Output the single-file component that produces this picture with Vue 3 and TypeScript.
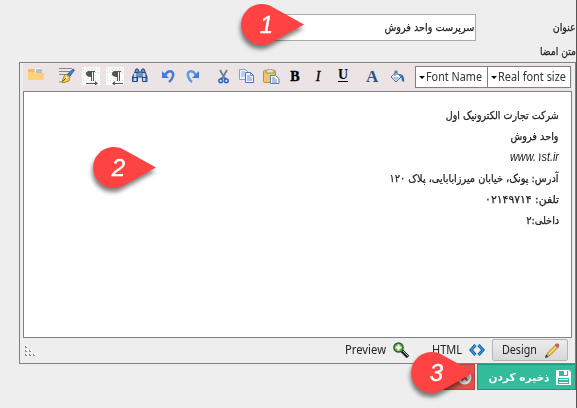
<script setup lang="ts">
interface Line { text: string; width: number; latin?: boolean }

const lines: Line[] = [
  { text: 'شرکت تجارت الکترونیک اول', width: 113 },
  { text: 'واحد فروش', width: 48 },
  { text: 'www.۱st.ir', width: 49, latin: true },
  { text: 'آدرس: پونک، خیابان میرزابابایی، پلاک ۱۲۰', width: 169 },
  { text: 'تلفن: ۰۲۱۴۹۷۱۴', width: 74 },
  { text: 'داخلی:۲', width: 33 },
]

const pins = [
  { n: 1, x: 233, y: 0 },
  { n: 2, x: 85, y: 143 },
  { n: 3, x: 403, y: 348 },
]

// Condenses or expands a label to the given width in pixels.
const vFit = {
  mounted(el: HTMLElement, binding: { value: number }) {
    const natural = el.getBoundingClientRect().width
    el.style.transform = `scaleX(${binding.value / natural})`
    el.style.marginInlineEnd = `${binding.value - natural}px`
  },
}
</script>

<template>
  <main class="page">
    <div class="row title-row">
      <div class="field"><span v-fit="90" class="fit">سرپرست واحد فروش</span></div>
      <label class="caption"><span v-fit="23" class="fit">عنوان</span></label>
    </div>
    <div class="row body-label"><span v-fit="36" class="fit">متن امضا</span></div>

    <section class="editor">
      <div class="toolbar">
        <svg class="ic folder" width="16" height="16" viewBox="0 0 16 16">
          <path d="M0 3q0-1 1-1h5l1 2v9H0z" fill="#f6b578" />
          <path d="M7 1h7v6H7z" fill="#fff" stroke="#ddd" stroke-width=".5" /><path d="M8 2h6v4H8z" fill="#b9bfc6" />
          <path d="M0 5h6l2 1h8v6q0 1-1 1H1q-1 0-1-1z" fill="#ffd17c" />
        </svg>
        <svg class="ic pen" width="17" height="16" viewBox="0 0 17 16">
          <path d="M1 1.500h13M1 4.500h11M1 7.500h7M1 15h5" stroke="#888" />
          <path d="M15 2l1.500 1-5 7-3-2z" fill="#3d7bd0" stroke="#1d4f9c" stroke-width=".7" />
          <path d="M8 7l4 3-1 4-6 2-1-1 2-6z" fill="#f4c84e" stroke="#a8762b" stroke-width=".8" />
          <path d="M4 15l5-5" stroke="#795320" /><circle cx="8.500" cy="10.500" r="1" fill="#fff" />
        </svg>
        <svg v-for="dir in ['ltr', 'rtl']" :key="dir" class="ic para" :class="dir" width="18" height="18" viewBox="0 0 18 18">
          <path d="M0 0h18v18H0z" fill="#fbfcf9" />
          <path d="M1 1.500h16M3 3.500h14M1 5.500h16M1 13.500h16" stroke="#cfe6ca" stroke-dasharray="1 2" />
          <path d="M1 2.500h16M1 8.500h5m7 0h4M1 11.500h16" stroke="#ecd6ec" stroke-dasharray="1 3" />
          <path d="M8 3H14v1h-1v9h-1V4h-1v9h-1V9C3 9 4 3 8 3z" fill="#555" :transform="dir === 'ltr' ? 'translate(-1 1)' : 'translate(1 1)'" />
          <path v-if="dir === 'ltr'" d="M4 16h9v-2l3 2.500-3 2v-1.500H4z" fill="#555" />
          <path v-else d="M17 16H9v-2l-3 2.500 3 2v-1.500h8z" fill="#555" />
        </svg>
        <svg class="ic find" width="16" height="15" viewBox="0 0 16 15">
          <path d="M2.500 5L4 1h2l1 3h2l1-3h2l1.500 4 1.500 4v4.500h-4.500V9h-5v4.500H.5V9z" fill="#6d93c9" stroke="#25477d" />
          <path d="M3 5v8M12 5v8" stroke="#e0edfb" stroke-width="1.500" /><path d="M1 9.500h5M10 9.500h5M3 4.500h3.500M9.500 4.500H13" stroke="#25477d" />
        </svg>
        <svg class="ic undo" width="13" height="14" viewBox="0 0 13 14">
          <path d="M3 6C7 0 12 2 11 7Q10 11 7 13" fill="none" stroke="#427bda" stroke-width="2.500" /><path d="M0 2v7h7z" fill="#427bda" />
        </svg>
        <svg class="ic redo" width="13" height="14" viewBox="0 0 13 14">
          <path d="M10 6C6 0 1 2 2 7Q3 11 6 13" fill="none" stroke="#6297e5" stroke-width="2.500" /><path d="M13 2v7H6z" fill="#427bda" />
        </svg>
        <svg class="ic cut" width="11" height="15" viewBox="0 0 11 15">
          <path d="M2 1l5 9M9 1L4 10" stroke="#6f7c90" stroke-width="1.800" />
          <path d="M4 9l-1 1M7 9l1 1" stroke="#275fc0" stroke-width="2" />
          <circle cx="2.700" cy="11.800" r="1.900" fill="none" stroke="#2866ce" stroke-width="1.500" /><circle cx="8.300" cy="11.800" r="1.900" fill="none" stroke="#2866ce" stroke-width="1.500" />
        </svg>
        <svg class="ic copy" width="16" height="14" viewBox="0 0 16 14">
          <path d="M.5.5h6l3 3v7h-9z" fill="#edf4ff" stroke="#7da2df" /><path d="M2 3h4M2 5h5M2 7h5" stroke="#86a8dc" />
          <path d="M6.500 3.500h5l3 3v7h-8z" fill="#f5f9ff" stroke="#4777be" /><path d="M11.500 3.500v3h3M8 7h3M8 9h5M8 11h5" fill="none" stroke="#6791ce" />
        </svg>
        <svg class="ic paste" width="17" height="15" viewBox="0 0 17 15">
          <rect x=".5" y="1.500" width="12" height="12" rx="1" fill="#f2c668" stroke="#c28d32" />
          <path d="M3 1h2l1-1h2l1 1h2v3H3z" fill="#e5e5cf" stroke="#918461" stroke-width=".8" />
          <path d="M7.500 6.500h5l3.500 3v5H7.500z" fill="#f7faff" stroke="#557fb4" /><path d="M9 9h3M9 11h5M9 13h5" stroke="#6889b6" />
        </svg>
        <b class="ic g bold">B</b>
        <i class="ic g ital">I</i>
        <b class="ic g under">U</b>
        <b class="ic g color">A</b>
        <svg class="ic fill" width="15" height="14" viewBox="0 0 15 14">
          <path d="M6 2l5 5-5 5-5-5z" fill="#eef4fb" stroke="#52719b" /><path d="M2 7h8l-4 4z" fill="#a8c6e6" />
          <path d="M5 6V1h2v4" fill="none" stroke="#5b6c80" /><path d="M8 4q7-1 6 8l-2-1-1-5z" fill="#2f66b5" />
        </svg>
        <div class="select name"><span class="arrow"></span><span v-fit="56" class="fit">Font Name</span></div>
        <div class="select size"><span class="arrow"></span><span v-fit="68" class="fit">Real font size</span></div>
      </div>

      <div class="content">
        <p v-for="line in lines" :key="line.text" :class="{ latin: line.latin }">
          <span v-fit="line.width" class="fit">{{ line.text }}</span>
        </p>
      </div>

      <div class="modes">
        <svg class="grip" width="12" height="12" viewBox="0 0 12 12">
          <path d="M1 0h2v2H1zM1 4h2v2H1zM5 4h2v2H5zM1 8h2v2H1zM5 8h2v2H5zM9 8h2v2H9z" fill="#fff" />
          <path d="M.5 1v1.500H2M.5 5v1.500H2M4.500 5v1.500H6M.5 9v1.500H2M4.500 9v1.500H6M8.500 9v1.500H10" fill="none" stroke="#888" />
        </svg>
        <div class="mode preview"><span v-fit="41" class="fit">Preview</span>
          <svg width="16" height="16" viewBox="0 0 16 16">
            <path d="M9 9l6 6" stroke="#222" stroke-width="3.500" /><path d="M10 9l5 5" stroke="#bbb" stroke-width="1" />
            <circle cx="5.500" cy="5.500" r="4.600" fill="#69a842" stroke="#28662f" stroke-width="1.500" /><path d="M5.500 2.500v6M2.500 5.500h6" stroke="#fff" stroke-width="2" />
          </svg>
        </div>
        <div class="mode html"><span v-fit="30" class="fit">HTML</span>
          <svg width="16" height="12" viewBox="0 0 16 12"><path d="M6.500 1L2 6l4.500 5M9.500 1L14 6l-4.500 5" fill="none" stroke="#135590" stroke-width="3" /><path d="M6.500 1L2 6l4.500 5M9.500 1L14 6l-4.500 5" fill="none" stroke="#38a0e4" stroke-width="1.200" /></svg>
        </div>
        <div class="mode design"><span v-fit="35" class="fit">Design</span>
          <svg width="15" height="15" viewBox="0 0 15 15">
            <path d="M1.500 13.500l1-3.500 8-8 2.500 2.500-8 8z" fill="#f7bd45" stroke="#a97526" stroke-width=".8" /><path d="M4 11l7-7" stroke="#ffe79b" /><path d="M10 2l1-1q2-1 3 1l-1 3z" fill="#d95855" stroke="#a66" stroke-width=".7" /><path d="M0 15l1-3.500 2.500 2.500z" fill="#333" />
          </svg>
        </div>
      </div>
    </section>

    <div class="actions">
      <div class="btn cancel">
        <svg width="15" height="15" viewBox="0 0 15 15"><circle cx="7.500" cy="7.500" r="7" fill="#e4e4e4" /><path d="M4.500 4.500l6 6m0-6l-6 6" stroke="#c44e4b" stroke-width="2" /></svg>
      </div>
      <div class="btn save">
        <svg width="15" height="15" viewBox="0 0 15 15"><path fill-rule="evenodd" d="M0 0h13l2 2v13H0zM3 1v5h9V1zM2 8v6h11V8z" fill="#fff" /><path d="M8 1h3v4H8zM3 9h9v1H3zM3 12h9v1H3z" fill="#fff" /></svg>
        <span v-fit="61" class="fit">ذخیره کردن</span>
      </div>
    </div>

    <svg v-for="pin in pins" :key="pin.n" class="pin" :style="{ left: pin.x + 'px', top: pin.y + 'px' }" width="80" height="60" viewBox="0 0 80 60">
      <path d="M71 24.500L38.500 42.500A20.500 20.500 0 1 1 38.500 6.500Z" fill="#ff4343" />
      <text x="33.500" :y="33" text-anchor="middle">{{ pin.n }}</text>
    </svg>
  </main>
</template>

<style>
body { overflow: hidden; }
</style>
<style scoped>
.page { position: relative; box-sizing: border-box; width: 577px; height: 408px; background: #eee; border-right: 1px solid #555; font: 11px "DejaVu Sans", sans-serif; color: #222; overflow: hidden; }
.fit { display: inline-block; white-space: nowrap; transform-origin: left center; }
.row { display: flex; justify-content: flex-end; direction: ltr; }
.title-row { padding-top: 14px; height: 27px; gap: 76px; }
.field { box-sizing: border-box; width: 220px; height: 27px; border: 1px solid #aaa; background: #fff; direction: rtl; line-height: 25px; padding-right: 1px; }
.caption { width: 24px; direction: rtl; line-height: 28px; }
.field .fit, .caption .fit, .body-label .fit, .content .fit, .save .fit { transform-origin: right center; }
.field .fit, .caption .fit, .body-label .fit, .content .fit { -webkit-text-stroke: .25px #222; }
.body-label { direction: rtl; justify-content: flex-start; height: 21px; line-height: 21px; }
.editor { box-sizing: border-box; margin-left: 19px; width: 557px; height: 302px; border: 1px solid #808080; padding: 0 3px; display: flex; flex-direction: column; }
.toolbar { height: 27px; margin-top: 1px; background: #ece4e4; display: flex; align-items: flex-start; }
.ic { flex: none; }
.folder { margin: 3px 0 0 5px; }
.pen { margin: 3px 0 0 14px; }
.para.ltr { margin: 3px 0 0 7px; }
.para.rtl { margin: 3px 0 0 6px; }
.find { margin: 4px 0 0 8px; }
.undo { margin: 5px 0 0 14px; }
.redo { margin: 5px 0 0 11px; }
.cut { margin: 5px 0 0 19px; }
.copy { margin: 5px 0 0 10px; }
.paste { margin: 5px 0 0 8px; }
.g { font: bold 14px/15px "Liberation Serif", serif; color: #000; width: 10px; text-align: center; }
.bold { margin: 5px 0 0 10px; -webkit-text-stroke: .4px #000; }
.ital { margin: 5px 0 0 13px; font-style: italic; font-weight: normal; -webkit-text-stroke: .3px #000; }
.under { margin: 5px 0 0 15px; border-bottom: 1px solid #000; line-height: 12px; height: 12px; }
.color { margin: 5px 0 0 18px; width: 12px; font-size: 17px; color: #2f4f8c; }
.fill { margin: 6px 0 0 12px; }
.select { box-sizing: border-box; height: 22px; margin-top: 2px; border: 1px solid #808080; background: #fff; font: 12px/20px "Noto Sans", sans-serif; color: #333; display: flex; align-items: center; padding-left: 3px; gap: 1px; flex: none; }
.select .arrow { border: 3px solid transparent; border-top-color: #000; border-bottom: 0; }
.name { width: 73px; margin-left: 10px; }
.size { width: 84px; margin-left: -1px; }
.content { box-sizing: border-box; height: 247px; border: 1px solid #808080; background: #fff; direction: rtl; padding: 13px 12px 0 0; }
.content p { margin: 0; height: 21px; line-height: 21px; display: flex; }
.content .latin { font: italic 12px/21px "Liberation Sans", "DejaVu Sans", sans-serif; }
.content .latin .fit { -webkit-text-stroke: 0; }
.modes { height: 24px; display: flex; align-items: center; font: 12px/20px "Noto Sans", sans-serif; color: #222; }
.grip { margin: 2px 0 0 2px; }
.mode { display: flex; align-items: center; flex: none; }
.preview { margin-left: auto; gap: 7px; }
.html { margin-left: 23px; gap: 7px; }
.design { box-sizing: border-box; height: 22px; width: 76px; margin: 0 4px 0 7px; padding-left: 9px; gap: 8px; border: 1px solid #b4b4b4; border-radius: 2px; background: linear-gradient(#ececec, #d8d8d8); }
.actions { display: flex; justify-content: flex-end; gap: 2px; }
.btn { box-sizing: border-box; height: 26px; display: flex; align-items: center; }
.cancel { width: 34px; background: #d9534f; border: 1px solid #c9413d; justify-content: flex-end; padding-right: 2px; }
.save { width: 99px; background: #32bc9c; border: 1px solid #17997b; color: #fff; direction: rtl; padding-right: 4px; gap: 6px; font-weight: bold; }
.pin { position: absolute; filter: drop-shadow(-1px 4px 2px rgba(0, 0, 0, .5)); }
.pin text { font: italic 24px "Liberation Sans", sans-serif; fill: #fff; stroke: #fff; stroke-width: .4px; }
</style>
